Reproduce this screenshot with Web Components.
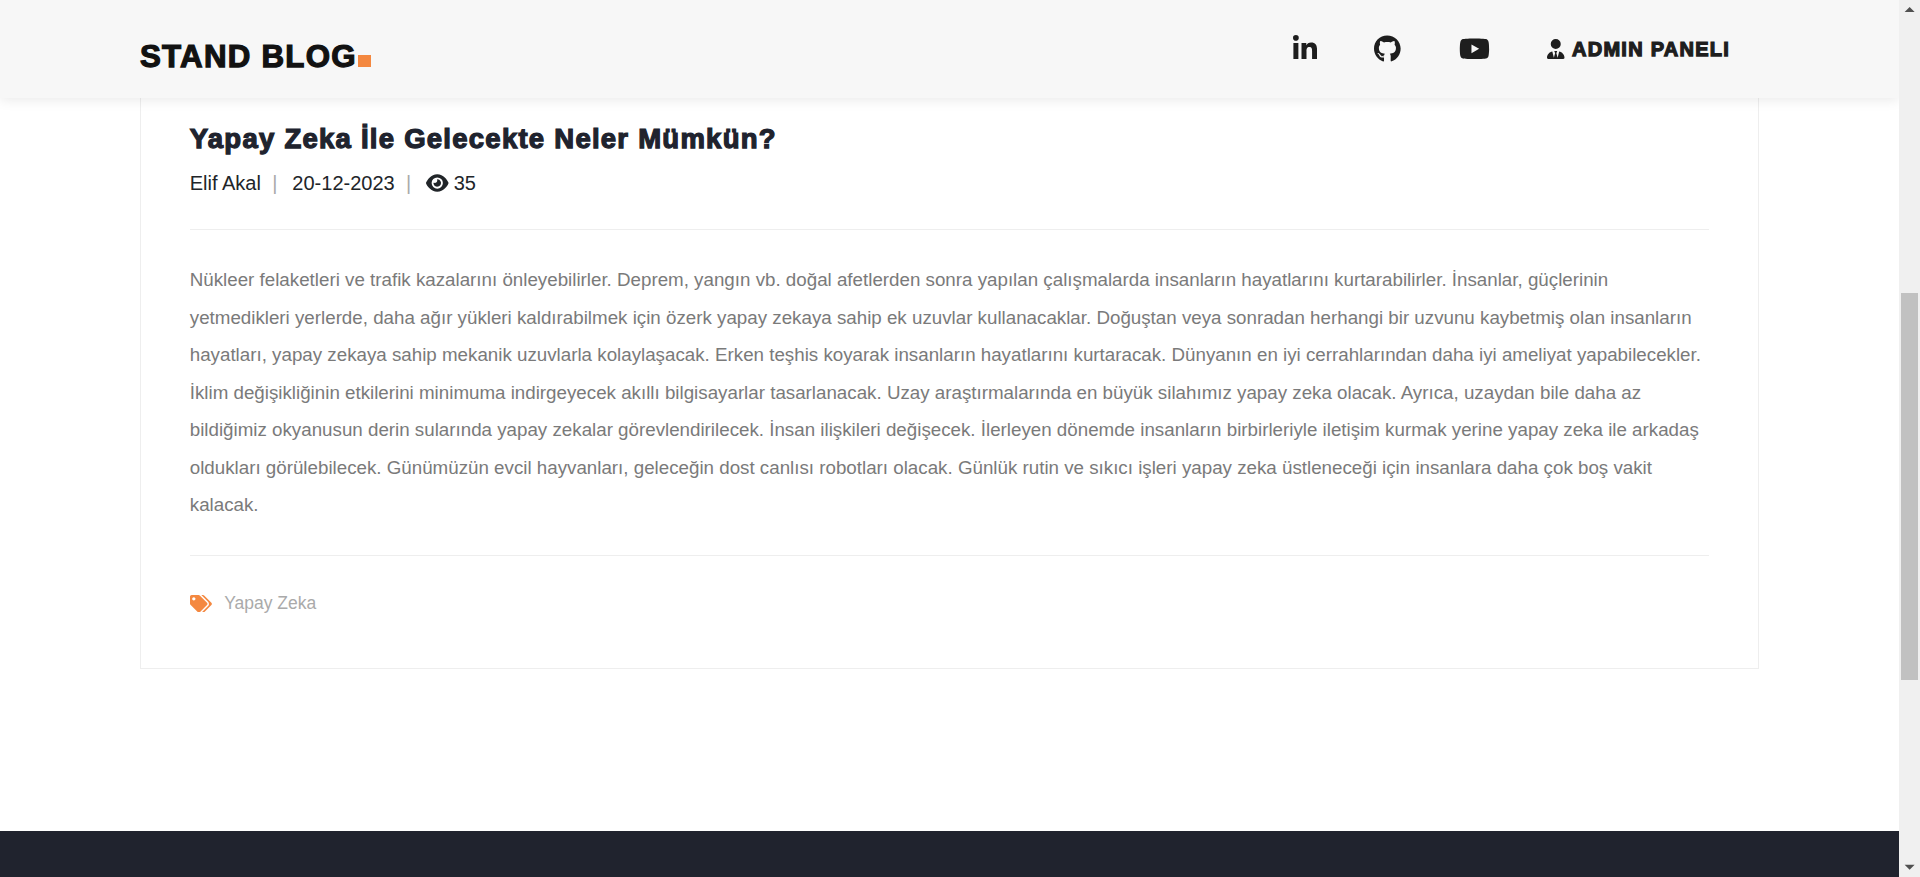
<!DOCTYPE html>
<html lang="tr">
<head>
<meta charset="utf-8">
<title>Stand Blog</title>
<style>
html, body { height: 100%; margin: 0; }
body {
  zoom: 1.25;
  display: flex;
  overflow: hidden;
  background: #fff;
  color: #212529;
  font: 16px/24px "Liberation Sans", Arial, sans-serif;
}
</style>
</head>
<body>
<blog-page>
  <blog-header slot="header">
    <nav-link href="#linkedin" icon="linkedin" label="LinkedIn"></nav-link>
    <nav-link href="#github" icon="github" label="GitHub"></nav-link>
    <nav-link href="#youtube" icon="youtube" label="YouTube"></nav-link>
    <nav-link href="#admin" icon="user">ADMIN PANELI</nav-link>
  </blog-header>
  <blog-post author="Elif Akal" date="20-12-2023" views="35">
    <span slot="title">Yapay Zeka İle Gelecekte Neler Mümkün?</span>
    Nükleer felaketleri ve trafik kazalarını önleyebilirler. Deprem, yangın vb. doğal afetlerden sonra yapılan çalışmalarda insanların hayatlarını kurtarabilirler. İnsanlar, güçlerinin yetmedikleri yerlerde, daha ağır yükleri kaldırabilmek için özerk yapay zekaya sahip ek uzuvlar kullanacaklar. Doğuştan veya sonradan herhangi bir uzvunu kaybetmiş olan insanların hayatları, yapay zekaya sahip mekanik uzuvlarla kolaylaşacak. Erken teşhis koyarak insanların hayatlarını kurtaracak. Dünyanın en iyi cerrahlarından daha iyi ameliyat yapabilecekler. İklim değişikliğinin etkilerini minimuma indirgeyecek akıllı bilgisayarlar tasarlanacak. Uzay araştırmalarında en büyük silahımız yapay zeka olacak. Ayrıca, uzaydan bile daha az bildiğimiz okyanusun derin sularında yapay zekalar görevlendirilecek. İnsan ilişkileri değişecek. İlerleyen dönemde insanların birbirleriyle iletişim kurmak yerine yapay zeka ile arkadaş oldukları görülebilecek. Günümüzün evcil hayvanları, geleceğin dost canlısı robotları olacak. Günlük rutin ve sıkıcı işleri yapay zeka üstleneceği için insanlara daha çok boş vakit kalacak.
    <a slot="tag" href="#yapay-zeka">Yapay Zeka</a>
  </blog-post>
</blog-page>
<scroll-bar></scroll-bar>

<script>
const ICONS = {
  linkedin: ['0 0 448 512', 'M100.28 448H7.4V148.9h92.88zM53.79 108.1C24.09 108.1 0 83.5 0 53.8a53.79 53.79 0 0 1 107.58 0c0 29.7-24.1 54.3-53.79 54.3zM447.9 448h-92.68V302.4c0-34.7-.7-79.2-48.29-79.2-48.29 0-55.69 37.7-55.69 76.7V448h-92.78V148.9h89.08v40.8h1.3c12.4-23.5 42.69-48.3 87.88-48.3 94 0 111.28 61.9 111.28 142.3V448z'],
  github: ['0 0 496 512', 'M165.9 397.4c0 2-2.3 3.6-5.2 3.6-3.3.3-5.6-1.3-5.6-3.6 0-2 2.3-3.6 5.2-3.6 3-.3 5.6 1.3 5.6 3.6zm-31.1-4.5c-.7 2 1.3 4.3 4.3 4.9 2.6 1 5.6 0 6.2-2s-1.3-4.3-4.3-5.2c-2.6-.7-5.5.3-6.2 2.3zm44.2-1.7c-2.9.7-4.9 2.6-4.6 4.9.3 2 2.9 3.3 5.9 2.6 2.9-.7 4.9-2.6 4.6-4.6-.3-1.9-3-3.2-5.9-2.9zM244.8 8C106.1 8 0 113.3 0 252c0 110.9 69.8 205.8 169.5 239.2 12.8 2.3 17.3-5.6 17.3-12.1 0-6.2-.3-40.4-.3-61.4 0 0-70 15-84.7-29.8 0 0-11.4-29.1-27.8-36.6 0 0-22.9-15.7 1.6-15.4 0 0 24.9 2 38.6 25.8 21.9 38.6 58.6 27.5 72.9 20.9 2.3-16 8.8-27.1 16-33.7-55.9-6.2-112.3-14.3-112.3-110.5 0-27.5 7.6-41.3 23.6-58.9-2.6-6.5-11.1-33.3 2.6-67.9 20.9-6.5 69 27 69 27 20-5.6 41.5-8.5 62.8-8.5s42.8 2.9 62.8 8.5c0 0 48.1-33.6 69-27 13.7 34.7 5.2 61.4 2.6 67.9 16 17.7 25.8 31.5 25.8 58.9 0 96.5-58.9 104.2-114.8 110.5 9.2 7.9 17 22.9 17 46.4 0 33.7-.3 75.4-.3 83.6 0 6.5 4.6 14.4 17.3 12.1C428.2 457.8 496 362.9 496 252 496 113.3 383.5 8 244.8 8z'],
  youtube: ['0 0 576 512', 'M549.655 124.083c-6.281-23.65-24.787-42.276-48.284-48.597C458.781 64 288 64 288 64S117.22 64 74.629 75.486c-23.497 6.322-42.003 24.947-48.284 48.597-11.412 42.867-11.412 132.305-11.412 132.305s0 89.438 11.412 132.305c6.281 23.65 24.787 41.5 48.284 47.821C117.22 448 288 448 288 448s170.78 0 213.371-11.486c23.497-6.321 42.003-24.171 48.284-47.821 11.412-42.867 11.412-132.305 11.412-132.305s0-89.438-11.412-132.305zm-317.51 213.508V175.185l142.739 81.205-142.739 81.201z'],
  user: ['0 0 448 512', 'M224 256A128 128 0 1 0 224 0a128 128 0 1 0 0 256zM209.1 359.2l-18.6-31c-6.400-10.700 1.300-24.200 13.700-24.200H224h19.700c12.400 0 20.100 13.600 13.700 24.200l-18.600 31 33.400 123.900 39.500-161.200C384 334 448 402 448 482.300c0 16.400-13.300 29.700-29.700 29.700H29.700C13.300 512 0 498.700 0 482.300 0 402 62 334 136.200 321.900l39.500 161.200z'],
  eye: ['0 0 576 512', 'M288 32c-80.800 0-145.500 36.800-192.600 80.600C48.600 156 17.300 208 2.500 243.700c-3.300 7.900-3.300 16.700 0 24.600C17.300 304 48.600 356 95.400 399.400 142.500 443.200 207.200 480 288 480s145.500-36.800 192.600-80.600c46.800-43.500 78.100-95.400 93-131.100 3.300-7.900 3.300-16.700 0-24.600-14.900-35.700-46.200-87.700-93-131.100C433.500 68.800 368.800 32 288 32zM144 256a144 144 0 1 1 288 0 144 144 0 1 1-288 0zm144-64c0 35.300-28.700 64-64 64-7.100 0-13.900-1.200-20.300-3.300-5.500-1.800-11.900 1.600-11.700 7.400.3 6.900 1.300 13.800 3.200 20.700 13.700 51.200 66.400 81.600 117.600 67.900s81.600-66.400 67.900-117.600c-11.100-41.500-47.800-69.400-88.600-71.100-5.800-.2-9.200 6.100-7.400 11.700 2.100 6.400 3.300 13.200 3.300 20.300z'],
  tags: ['0 0 640 512', 'M497.941 225.941L286.059 14.059A48 48 0 0 0 252.118 0H48C21.49 0 0 21.49 0 48v204.118a48 48 0 0 0 14.059 33.941l211.882 211.882c18.744 18.745 49.136 18.746 67.882 0l204.118-204.118c18.745-18.745 18.745-49.137 0-67.882zM112 160c-26.51 0-48-21.49-48-48s21.49-48 48-48 48 21.49 48 48-21.49 48-48 48zm513.941 133.823L421.823 497.941c-18.745 18.745-49.137 18.745-67.882 0l-.36-.36L527.64 323.522c16.999-16.999 26.36-39.6 26.36-63.64s-9.362-46.641-26.36-63.64L331.397 0h48.721a48 48 0 0 1 33.941 14.059l211.882 211.882c18.745 18.745 18.745 49.137 0 67.882z'],
};

function render(el, html) {
  el.attachShadow({ mode: 'open' }).innerHTML = html;
}

/* Solid glyph; its height comes from --icon-size, its width from the glyph. */
customElements.define('blog-icon', class extends HTMLElement {
  connectedCallback() {
    if (this.shadowRoot) return;
    const [box, path] = ICONS[this.getAttribute('name')];
    render(this, `<style>
      :host { display: block; flex: none; }
      svg { display: block; height: var(--icon-size, 16px); fill: currentColor; }
    </style><svg viewBox="${box}" aria-hidden="true"><path fill-rule="evenodd" d="${path}"/></svg>`);
  }
});

customElements.define('nav-link', class extends HTMLElement {
  connectedCallback() {
    if (this.shadowRoot) return;
    const label = this.getAttribute('label');
    render(this, `<style>
      :host { display: block; --icon-size: ${label ? 22 : 16}px; }
      a { display: flex; align-items: center; gap: 6px; color: #1e1e1e; text-decoration: none;
          font-weight: 900; letter-spacing: 1px; -webkit-text-stroke: 1px currentColor; white-space: nowrap; }
    </style>
    <a href="${this.getAttribute('href')}"${label ? ` aria-label="${label}"` : ''}><blog-icon name="${this.getAttribute('icon')}"></blog-icon><slot></slot></a>`);
  }
});

customElements.define('blog-header', class extends HTMLElement {
  connectedCallback() {
    if (this.shadowRoot) return;
    render(this, `<style>
      :host { display: block; background: #f7f7f7; box-shadow: 0 1px 10px rgba(0, 0, 0, .1); }
      .bar { display: flex; justify-content: space-between; align-items: flex-start;
             box-sizing: border-box; width: 90%; max-width: 1295px; height: 78px; margin: 0 auto; }
      .brand { display: flex; align-items: baseline; gap: 1px; margin-top: 30px; color: #121212; text-decoration: none;
               font-size: 25px; line-height: 30px; font-weight: 900; letter-spacing: 1px; -webkit-text-stroke: 1px currentColor; }
      .dot { width: 10px; height: 9px; background: #f48840; }
      nav { display: flex; align-items: center; gap: 46px; height: 78px; padding-right: 23px; }
    </style>
    <div class="bar">
      <a class="brand" href="#home">STAND BLOG<span class="dot"></span></a>
      <nav><slot></slot></nav>
    </div>`);
  }
});

customElements.define('blog-post', class extends HTMLElement {
  connectedCallback() {
    if (this.shadowRoot) return;
    const get = name => this.getAttribute(name);
    render(this, `<style>
      :host { display: block; box-sizing: border-box; width: 90%; max-width: 1295px; margin: 0 auto 129px; }
      article { padding: 21px 39px 39px; border: solid #eee; border-width: 0 1px 1px; }
      h1 { margin: 0 0 11px; color: #20232e; font-size: 22px; line-height: 24px; font-weight: 900; letter-spacing: 1px; -webkit-text-stroke: 1px currentColor; }
      .meta { display: flex; align-items: center; margin: 0; padding: 0; list-style: none; }
      .meta li { display: flex; align-items: center; gap: 4px; }
      .meta li + li::before { content: "|"; margin: 0 8px 0 9px; color: #aaa; }
      p { margin: 25px 0; padding: 25px 0; border: solid #eee; border-width: 1px 0;
          color: #7a7a7a; font-size: 15px; line-height: 30px; }
      .tags { display: flex; align-items: center; gap: 10px; color: #f48840; font-size: 14px; line-height: 26px; --icon-size: 14px; }
      ::slotted(a) { color: #aaa; text-decoration: none; }
    </style>
    <article>
      <h1><slot name="title"></slot></h1>
      <ul class="meta">
        <li>${get('author')}</li>
        <li>${get('date')}</li>
        <li><blog-icon name="eye"></blog-icon>${get('views')}</li>
      </ul>
      <p><slot></slot></p>
      <div class="tags"><blog-icon name="tags"></blog-icon><slot name="tag"></slot></div>
    </article>`);
  }
});

customElements.define('blog-page', class extends HTMLElement {
  connectedCallback() {
    if (this.shadowRoot) return;
    render(this, `<style>
      :host { display: flex; flex-direction: column; flex: 1; min-width: 0; }
      header { position: relative; z-index: 1; }
      footer { flex: 1; background: #20232e; }
    </style>
    <header><slot name="header"></slot></header>
    <main><slot></slot></main>
    <footer></footer>`);
  }
});

customElements.define('scroll-bar', class extends HTMLElement {
  connectedCallback() {
    if (this.shadowRoot) return;
    render(this, `<style>
      :host { display: flex; flex-direction: column; position: relative; z-index: 2; flex: none; width: 17px; background: #f0f0f0; }
      svg { display: block; width: 17px; height: 17px; fill: #505050; }
      .track { flex: 1; display: grid; grid-template-rows: 272fr 387fr 176fr; padding: 0 2px; }
      .thumb { grid-row: 2; background: #c1c1c1; }
    </style>
    <svg viewBox="0 0 17 17" aria-hidden="true"><path d="M8.5 5.5 12.5 9.5h-8z"/></svg>
    <div class="track"><div class="thumb"></div></div>
    <svg viewBox="0 0 17 17" aria-hidden="true"><path d="M4.5 7h8l-4 4z"/></svg>`);
  }
});
</script>
</body>
</html>
